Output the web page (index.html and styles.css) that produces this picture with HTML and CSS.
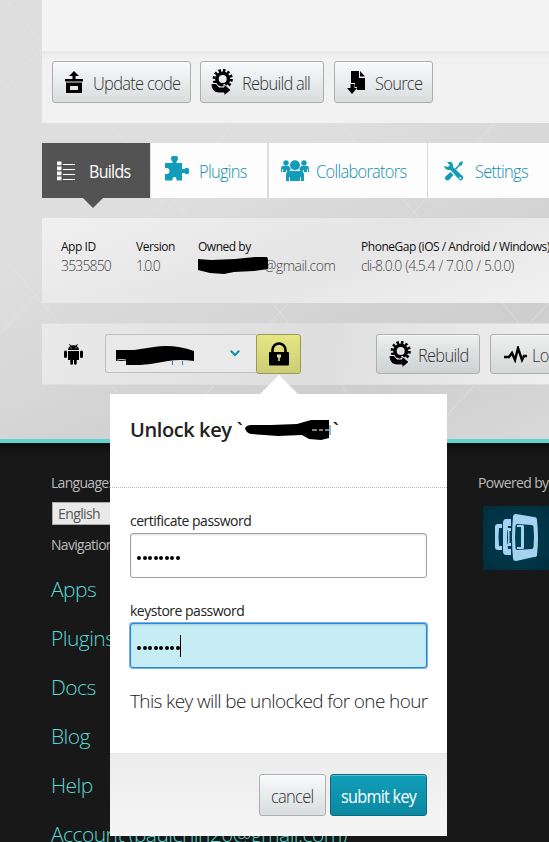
FILE: index.html
```html
<!DOCTYPE html>
<html lang="en">
<head>
<meta charset="utf-8">
<title>Builds</title>
<link rel="stylesheet" href="styles.css">
</head>
<body>
<svg class="defs" width="0" height="0">
  <defs>
    <symbol id="rebuild" viewBox="0 0 22 26">
      <circle cx="11.7" cy="10" r="5.800" fill="none" stroke="#000" stroke-width="3.600"/>
      <circle cx="11.7" cy="10" r="8.600" fill="none" stroke="#000" stroke-width="3" stroke-dasharray="2.500 2.003"/>
      <path d="M0 14.500h5l3 3.500h5v-3l7 6-7 6v-3H8C3 24 0 20 0 14.500z" fill="#000" stroke="#eef0f0" stroke-width="1"/>
    </symbol>
  </defs>
</svg>
<div class="page">
  <main class="main">
    <div class="top"></div>
    <div class="toolbar">
      <button class="btn update"><svg width="18" height="22" viewBox="0 0 18 22"><path d="M9 0l5 5h-3.500v3H18v2.500H0V8h7.500V5H4zM1 11.500h16V22H1zm4 3.500v4h8v-4z" fill-rule="evenodd"/></svg><span>Update code</span></button>
      <button class="btn rebuild-all"><svg width="22" height="26"><use href="#rebuild"/></svg><span>Rebuild all</span></button>
      <button class="btn source"><svg width="19" height="23" viewBox="0 0 19 23"><path d="M4 0h8v7h6v12h-8v-3H8v-4H4zM13 0l5 5.500h-5zM3.500 13h4v4H10l-5 6-5-6h3.500z"/></svg><span>Source</span></button>
    </div>
    <nav class="tabs">
      <a class="tab active"><svg width="19" height="20" viewBox="0 0 19 20"><path d="M0 .5h4.500v3.800H0zm0 5h4.500v3.800H0zm0 5h4.500v3.800H0zm0 5h4.500v3.800H0zM6 3h12v1H6zm0 5h12v1H6zm0 5h12v1H6zm0 5h12v1H6z" fill="#fff"/></svg><span>Builds</span></a>
      <a class="tab plugins"><svg width="24" height="25" viewBox="0 0 24 25"><path d="M0 7h7.500V5.500a3.500 3.500 0 1 1 4 0V7H17v6h2.500a3 3 0 1 1 0 4H17v7.500h-5.500V23a2 2 0 0 0-4 0v1.500H0V18h1.500a3 3 0 1 0 0-6H0z" fill="#119cb7"/></svg><span>Plugins</span></a>
      <a class="tab collaborators"><svg width="28" height="21" viewBox="0 0 28 21" fill="#119cb7"><circle cx="14" cy="5.300" r="5"/><circle cx="5" cy="3" r="2.700"/><circle cx="23" cy="3" r="2.700"/><path d="M5 21v-6a4 4 0 0 1 4-4h10a4 4 0 0 1 4 4v6h-3v-4h-1v4H9v-4H8v4zM0 12V8q0-2 2-2h6l2 4-4 2v-2H5v2H2V9H1v3zM28 12V8q0-2-2-2h-6l-2 4 4 2v-2h1v2h3V9h1v3z"/></svg><span>Collaborators</span></a>
      <a class="tab settings"><svg width="20" height="20" viewBox="0 0 20 20" fill="#119cb7"><path d="M3 1.500Q8-1 9 4v2l10 9.500q1 3.500-3 4L6.500 9H4Q1 8.500 0 5l4 1 2-2z"/><path d="M1.500 15.500l5-4.500 3 3-4.500 5q-2 1-3.500-.5T1.500 15.500zM10.500 8l4-4 .500-2L18.500 0 19 1l-1.500 3.500-2 .500-3.500 4z"/><circle cx="16.300" cy="17" r="1" fill="#fff"/></svg><span>Settings</span></a>
    </nav>
    <section class="info">
      <dl class="appid"><dt>App ID</dt><dd>3535850</dd></dl>
      <dl class="version"><dt>Version</dt><dd>1.0.0</dd></dl>
      <dl class="owner"><dt>Owned by</dt><dd><svg class="blot" width="71" height="18" viewBox="0 0 71 18"><path d="M0 2l13 1 24-1L57 0h12l1 2v10l-14 2-20 1-10 2-14-1-12-3z"/></svg><span>@gmail.com</span></dd></dl>
      <dl class="phonegap"><dt>PhoneGap (iOS / Android / Windows)</dt><dd>cli-8.0.0 (4.5.4 / 7.0.0 / 5.0.0)</dd></dl>
    </section>
    <section class="platform">
      <svg class="android" width="19" height="21" viewBox="0 0 19 21"><path d="M4 6q0-2.500 2.300-4L5 .5l.5-.5L7.200 1.500q2.300-.7 4.600 0L13.500 0l.5.500L12.700 2Q15 3.500 15 6zM4 7h11v9h-2.300v3.500a1.300 1.300 0 0 1-2.700 0V16H9v3.500a1.300 1.300 0 0 1-2.700 0V16H4zM0 8a1.400 1.400 0 0 1 3 0v4.500a1.400 1.400 0 0 1-3 0zM16 8a1.400 1.400 0 0 1 3 0v4.500a1.400 1.400 0 0 1-3 0z"/><path d="M6.500 3.500h1v1h-1zm5 0h1v1h-1z" fill="#eee"/></svg>
      <div class="key-select">
        <svg width="79" height="20" viewBox="0 0 79 20"><path d="M0 4h18L38 1q20-3 40 4v10q-14-2-26 0-15 3-28 4H10v-4H0z"/><path d="M56 15h1v4h-1zm10 0h1v4h-1z" fill="#3478b0"/><path d="M1 14q4-1 9 0" fill="none" stroke="#ddd"/></svg>
        <svg width="10" height="7" viewBox="0 0 10 7"><path d="M.8.8L5 5 9.200.8" fill="none" stroke="#118ea8" stroke-width="2"/></svg>
      </div>
      <button class="lock"><svg width="20" height="24" viewBox="0 0 20 24"><path d="M3.500 11V8a6.500 6.500 0 0 1 13 0v3" fill="none" stroke="#000" stroke-width="2.600"/><rect y="10" width="20" height="13.500" rx="1"/><path d="M8 12.500h4v3h-1.200V19H9.200v-3.500H8z" fill="#dfdf82"/></svg></button>
      <button class="btn rebuild"><svg width="22" height="26"><use href="#rebuild"/></svg><span>Rebuild</span></button>
      <button class="btn log"><svg width="23" height="17" viewBox="0 0 23 17"><path d="M0 11h5l3-4 3 7 3-12 4 12 2-4h3" fill="none" stroke="#000" stroke-width="2.400"/></svg><span>Log</span></button>
    </section>
  </main>
  <footer class="footer">
    <div class="links">
      <p class="language">Language:</p>
      <div class="select">English</div>
      <p class="navigation">Navigation:</p>
      <ul>
        <li>Apps</li><li>Plugins</li><li>Docs</li><li>Blog</li><li>Help</li><li>Account (paulchin20@gmail.com)</li>
      </ul>
    </div>
    <div class="powered">
      <p>Powered by</p>
      <div class="logo"><svg width="44" height="47" viewBox="0 0 44 47" fill="#a5d2f1" fill-rule="evenodd"><path d="M7 10H3q-3 0-3 3v20q0 3 3 3h4v-4H4q-1-9 0-18h3z"/><path d="M16 5h-5q-3 0-3 4v28q0 4 3 4h5v-6h-3q-2-11 0-23h3z"/><path d="M12 14h4v3h-1.500v12H16v3h-4v-2h1V16h-1z"/><path d="M21 0l18 3q3 0 3 3 2 18 0 35 0 2-3 2l-18 4q-3 0-3-3Q16 23 18 3q0-3 3-3zm1.500 10q-2 0-2 2-1 11 0 22 0 2 2 2l14-1q2 0 2-2 1-10 0-20 0-2-2-2z"/><path d="M22 11h6q1 0 1 2v20q0 2-1 2h-6v-2h4V13h-4z"/></svg></div>
    </div>
  </footer>
</div>
<div class="popover">
  <header><h2>Unlock key `<svg width="86" height="22" viewBox="0 0 86 22"><path d="M0 9q2-3 6-3h20l26-1L66 1h18v18l-8 2-12-1-7-4-24 1-27-2q-5-1-6-6z"/><path d="M67 11h5m2 0h4m2 0h4" stroke="#fff" stroke-width="1"/><path d="M85 6v10" stroke="#2377bd"/></svg>`</h2></header>
  <div class="form">
    <label>certificate password</label>
    <div class="field"><i></i><i></i><i></i><i></i><i></i><i></i><i></i><i></i></div>
    <label>keystore password</label>
    <div class="field focus"><i></i><i></i><i></i><i></i><i></i><i></i><i></i><i></i><b></b></div>
    <p>This key will be unlocked for one hour</p>
  </div>
  <div class="actions"><button class="btn cancel"><span>cancel</span></button><button class="btn submit"><span>submit key</span></button></div>
</div>
</body>
</html>
```
FILE: styles.css
```css
* { box-sizing: border-box; margin: 0; padding: 0; }
body { width: 549px; height: 842px; overflow: hidden; position: relative; font-family: "Open Sans", sans-serif; font-weight: 300; color: #444; }
svg { display: block; flex: none; }
.defs { position: absolute; }
.page { height: 842px; overflow: hidden; background: #d8d8d8; }
.main {
  height: 439px; padding-left: 42px; overflow: hidden;
  background:
    linear-gradient(50deg, transparent 49.8%, #e6e6e680 50%, transparent 50.3%) 0 0 / 230px 260px,
    linear-gradient(-48deg, transparent 49.8%, #e6e6e680 50%, transparent 50.3%) 80px 30px / 260px 240px,
    linear-gradient(155deg, #dedede 40%, #cecece 80%, #d8d8d8);
}
.top { height: 51px; background: #f4f4f4; }
.toolbar { height: 72px; display: flex; gap: 10px; padding: 10px; background: linear-gradient(#e8e8e8, #f1f1f1 8px); }
.btn { display: flex; align-items: center; flex: none; height: 42px; border: 1px solid #adafaf; border-radius: 3px; background: linear-gradient(#f8fafb, #d9dddd); color: #333; font: 300 18px "Open Sans", sans-serif; letter-spacing: -.8px; white-space: nowrap; box-shadow: inset 0 1px #fff9; }
.btn span, .tab span { transform: scaleX(.915); transform-origin: left; }
.btn span { margin-top: 1px; }
.update { width: 139px; padding-left: 12px; gap: 10px; }
.rebuild-all { width: 124px; padding-left: 10px; gap: 9px; margin-left: -1px; }
.source { width: 99px; padding-left: 12px; gap: 9px; }
.tabs { display: flex; height: 55px; margin-top: 20px; width: 540px; }
.tab { display: flex; align-items: center; height: 55px; background: #fdfdfd; color: #118fac; font-size: 18px; letter-spacing: -.8px; margin-right: 1px; white-space: nowrap; }
.active { position: relative; width: 108px; background: #535353; color: #fff; padding-left: 15px; gap: 13px; font-weight: 400; }
.active span { transform: scaleX(.89); }
.active::after { content: ""; position: absolute; left: 41px; top: 55px; border: 10px solid transparent; border-top-color: #535353; border-bottom: 0; }
.plugins { width: 116px; padding-left: 14px; gap: 10px; margin-right: 2px; }
.plugins svg { margin-top: -4px; }
.collaborators { width: 158px; padding-left: 12px; gap: 7px; }
.settings { width: 130px; padding-left: 16px; gap: 11px; }
.info { height: 85px; width: 540px; margin-top: 20px; padding: 19px 0 0 19px; display: flex; background: linear-gradient(160deg, #f0f0f0, #e5e5e5 50%, #f2f2f2); white-space: nowrap; }
.info dt { font-size: 12px; line-height: 20px; font-weight: 400; color: #111; letter-spacing: -.47px; }
.info dd { font-size: 14px; line-height: 18px; color: #444; letter-spacing: -.85px; }
.appid { width: 75px; }
.version { width: 62px; }
.version dd { letter-spacing: -1.5px; }
.owner { width: 163px; }
.owner dd { display: flex; letter-spacing: -.5px; }
.owner .blot { margin-right: -5px; position: relative; }
.phonegap { width: 192px; }
.phonegap dd { word-spacing: 1px; }
.platform { height: 62px; width: 540px; margin-top: 20px; padding: 10px 0 0 22px; display: flex; background: linear-gradient(100deg, #e9e9e9, #dedede 50%, #f1f1f1); border: 1px solid #dedede; border-width: 1px 0; }
.android { margin: 10px 22px 0 0; }
.key-select { width: 152px; height: 39px; display: flex; align-items: center; justify-content: space-between; padding: 0 17px 0 10px; border: 1px solid #c0c0c0; border-right: 0; border-radius: 3px 0 0 3px; background: #e9e9e9; }
.key-select svg:first-child { margin-top: 5px; }
.lock { width: 45px; height: 40px; padding: 0 0 1px 12px; border: 1px solid #999958; border-radius: 3px; background: linear-gradient(#e6e683, #cccc77); margin-left: -1px; }
.rebuild { width: 104px; height: 40px; margin-left: 75px; padding-left: 12px; gap: 7px; background: linear-gradient(#eeefef, #cdd1d1); }
.log { width: 90px; height: 40px; margin-left: 10px; padding-left: 13px; gap: 5px; background: linear-gradient(#eeefef, #d5d8d8); }
.footer { height: 403px; border-top: 4px solid #5fd3cf; padding-left: 51px; display: flex; background: linear-gradient(#0d0d0d, #181818 12px); color: #bbb; font-size: 14px; font-weight: 400; letter-spacing: -.7px; white-space: nowrap; }
.links { flex: none; width: 427px; }
.powered { flex: none; }
.language, .powered p { margin-top: 30px; line-height: 20px; }
.powered p { letter-spacing: -.65px; }
.select { width: 100px; height: 23px; margin: 9px 0 0 1px; padding-left: 5px; line-height: 21px; border: 1px solid #aaa; background: #e9e9e9; color: #555; letter-spacing: -.6px; }
.navigation { line-height: 20px; margin-top: 10px; }
ul { list-style: none; margin-top: 10px; }
li { height: 49px; line-height: 49px; font-size: 21px; font-weight: 300; letter-spacing: -.55px; color: #5cd6d2; }
.logo { margin: 13px 0 0 5px; width: 70px; height: 64px; padding: 8px 0 0 12px; background: radial-gradient(#004156, #002d3c); }
.popover { position: absolute; left: 110px; top: 394px; width: 337px; height: 442px; background: #fff; color: #222; white-space: nowrap; }
.popover::before { content: ""; position: absolute; left: 150px; top: -19px; border: 19px solid transparent; border-bottom-color: #fff; border-top: 0; }
.popover header { height: 94px; padding: 20px 20px 0; border-bottom: 1px dotted #bbb; }
h2 { display: flex; align-items: center; font-size: 20px; line-height: 32px; font-weight: 600; letter-spacing: -.4px; }
h2 svg { margin: 0 1px 0 3px; }
.form { height: 265px; padding: 22px 20px 0; }
label { display: block; font-size: 14px; line-height: 22px; height: 23px; font-weight: 400; letter-spacing: -.5px; }
.field { height: 45px; margin-bottom: 22px; border: 1px solid #a0a0a0; border-radius: 3px; display: flex; align-items: center; padding: 5px 0 0 6px; gap: 1.500px; box-shadow: inset 0 1px 2px #ddd; }
.field i { width: 4px; height: 4px; border-radius: 50%; background: #000; }
.field b { width: 1px; height: 22px; background: #000; margin: -5px 0 0 -1px; }
.focus { background: #c7edf4; border-color: #2389d8; box-shadow: 0 0 0 1px #7baef0, inset 0 1px 2px #a0ccd4; }
.form p { font-size: 19px; line-height: 24px; margin-top: -1px; letter-spacing: -.63px; }
.actions { height: 83px; padding: 20px 20px 0; display: flex; gap: 4px; justify-content: flex-end; background: linear-gradient(#ececec, #f5f5f5); border-top: 1px solid #e7e7e7; }
.cancel { width: 67px; padding-left: 11px; }
.submit { width: 97px; padding-left: 10px; background: linear-gradient(#109eb9, #0c89a1); border-color: #086b7f; color: #fff; font-weight: 400; box-shadow: inset 0 1px #58bdcd; }
.submit span { transform: scaleX(.9); }
```
